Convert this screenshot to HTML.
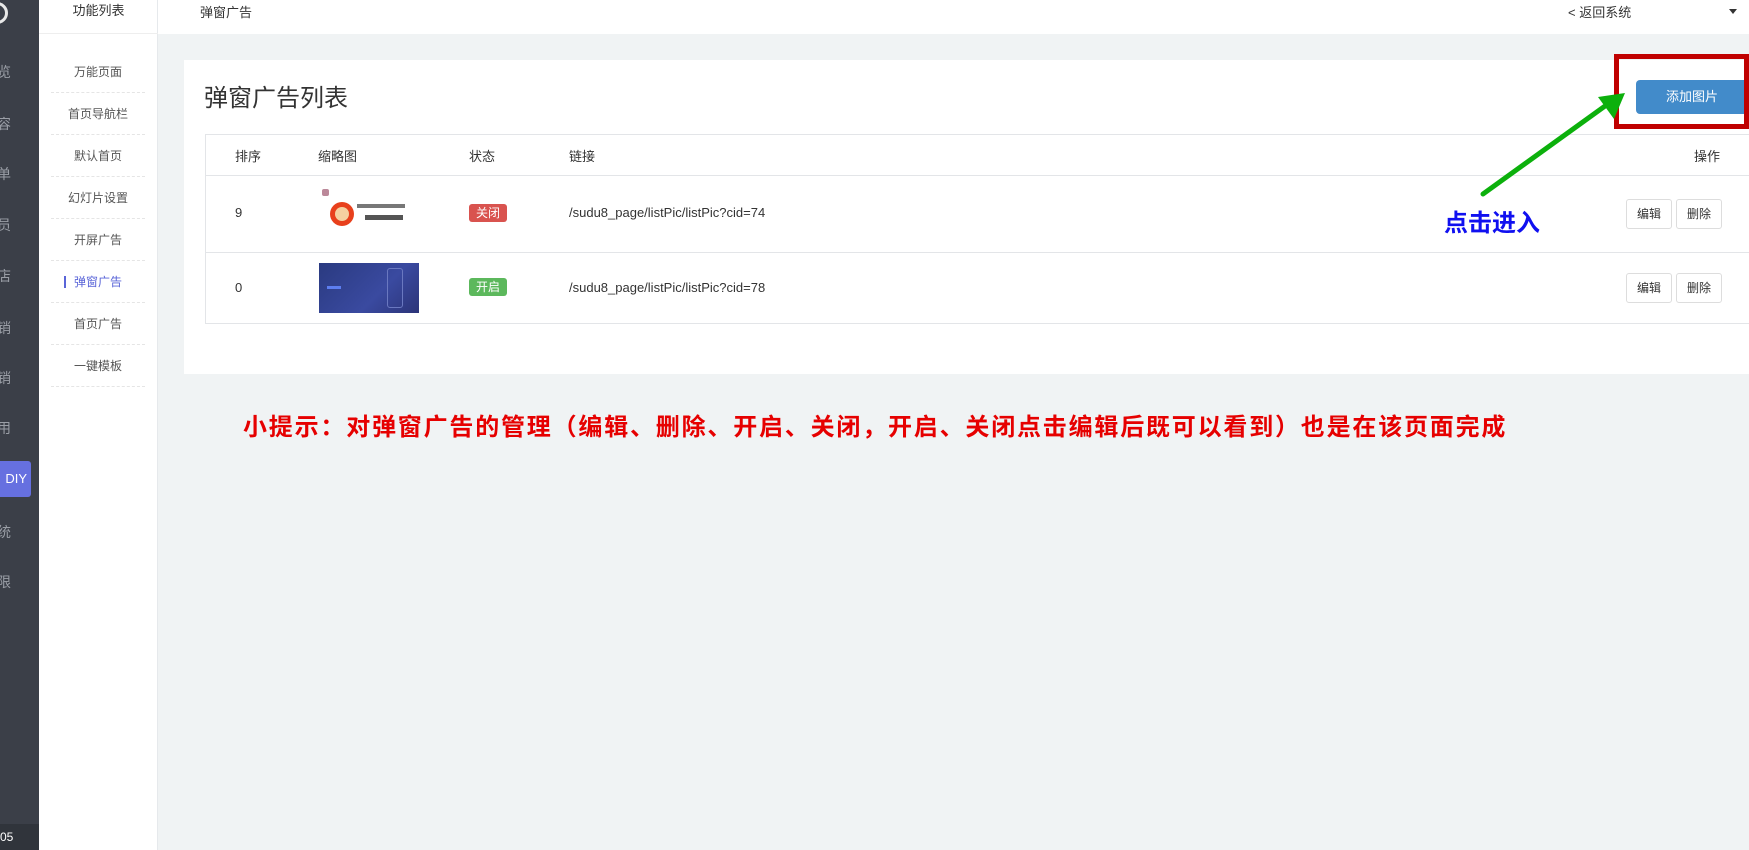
<!DOCTYPE html>
<html><head><meta charset="utf-8"><style>
*{margin:0;padding:0;box-sizing:border-box}
body{width:1749px;height:850px;overflow:hidden;background:#f0f3f4;font-family:"Liberation Sans","Noto Sans CJK SC",sans-serif;color:#333;position:relative}
.a{position:absolute;white-space:nowrap}
#dark{left:0;top:0;width:39px;height:850px;background:#3b3f48;overflow:hidden}
.dl{position:absolute;left:-3px;font-size:14px;color:#9a9ea6}
#side{left:39px;top:0;width:119px;height:850px;background:#fff;border-right:1px solid #e6e9ec}
.mi{position:absolute;left:12px;width:94px;text-align:center;font-size:12px;color:#555;height:42px;line-height:42px;border-bottom:1px dashed #e5e5e5}
#head{left:158px;top:0;width:1591px;height:34px;background:#fff}
#card{left:184px;top:60px;width:1565px;height:314px;background:#fff}
.hl{position:absolute;left:205px;width:1544px;height:1px;background:#e3e5e8}
.td{position:absolute;font-size:13px;color:#333}
.badge{position:absolute;left:469px;width:38px;height:18px;border-radius:3px;color:#fff;font-size:12px;text-align:center;line-height:18px}
.btn{position:absolute;width:46px;height:30px;border:1px solid #ddd;border-radius:3px;background:#fff;font-size:12px;text-align:center;line-height:28px;color:#333}
</style></head><body>
<div class="a" id="dark">
<div style="position:absolute;left:-14px;top:2px;width:22px;height:22px;border-radius:50%;border:3px solid #e8e8e8"></div>
<div class="dl" style="top:62px">览</div>
<div class="dl" style="top:114px">容</div>
<div class="dl" style="top:164px">单</div>
<div class="dl" style="top:215px">员</div>
<div class="dl" style="top:266px">店</div>
<div class="dl" style="top:318px">销</div>
<div class="dl" style="top:368px">销</div>
<div class="dl" style="top:418px">用</div>
<div style="position:absolute;left:0;top:461px;width:31px;height:36px;background:#6670e0;border-radius:0 3px 3px 0;color:#fff;font-size:13px;line-height:36px;text-align:right;padding-right:4px;overflow:hidden">DIY</div>
<div class="dl" style="top:522px">统</div>
<div class="dl" style="top:572px">限</div>
<div style="position:absolute;left:0;top:824px;width:39px;height:26px;background:#30343b;color:#fff;font-size:12px;line-height:26px">05</div>
</div>
<div class="a" id="side">
<div style="position:absolute;left:0;top:0;width:119px;height:34px;border-bottom:1px solid #eee;text-align:center;font-size:13px;line-height:22px">功能列表</div>
<div class="mi" style="top:51px">万能页面</div>
<div class="mi" style="top:93px">首页导航栏</div>
<div class="mi" style="top:135px">默认首页</div>
<div class="mi" style="top:177px">幻灯片设置</div>
<div class="mi" style="top:219px">开屏广告</div>
<div class="mi" style="top:261px;color:#5a65d8">弹窗广告<span style="position:absolute;left:13px;top:15px;width:2px;height:12px;background:#5a65d8"></span></div>
<div class="mi" style="top:303px">首页广告</div>
<div class="mi" style="top:345px">一键模板</div>
</div>
<div class="a" id="head">
<div class="a" style="left:42px;top:2px;font-size:13px">弹窗广告</div>
<div class="a" style="left:1410px;top:2px;font-size:13px">&lt; 返回系统</div>
<div class="a" style="left:1571px;top:9px;width:0;height:0;border-left:4px solid transparent;border-right:4px solid transparent;border-top:5px solid #333"></div>
</div>
<div class="a" id="card"></div>
<div class="a" style="left:204px;top:78px;font-size:24px;color:#333">弹窗广告列表</div>
<div class="a" style="left:205px;top:134px;width:1px;height:190px;background:#e3e5e8"></div>
<div class="hl" style="top:134px"></div>
<div class="hl" style="top:175px"></div>
<div class="hl" style="top:252px"></div>
<div class="hl" style="top:323px"></div>
<div class="td" style="left:235px;top:146px">排序</div>
<div class="td" style="left:318px;top:146px">缩略图</div>
<div class="td" style="left:469px;top:146px">状态</div>
<div class="td" style="left:569px;top:146px">链接</div>
<div class="td" style="left:1694px;top:146px">操作</div>
<div class="td" style="left:235px;top:205px">9</div>
<div class="td" style="left:235px;top:280px">0</div>
<div class="td" style="left:569px;top:205px">/sudu8_page/listPic/listPic?cid=74</div>
<div class="td" style="left:569px;top:280px">/sudu8_page/listPic/listPic?cid=78</div>
<div class="badge" style="top:204px;background:#d9534f">关闭</div>
<div class="badge" style="top:278px;background:#5cb85c">开启</div>
<div class="a" style="left:322px;top:189px;width:7px;height:7px;background:#b89;border-radius:2px"></div>
<div class="a" style="left:330px;top:202px;width:24px;height:24px;border-radius:50%;background:#e8401c"><div style="margin:5px;width:14px;height:14px;border-radius:50%;background:#f5d0a0"></div></div>
<div class="a" style="left:357px;top:204px;width:48px;height:4px;background:#777"></div>
<div class="a" style="left:365px;top:215px;width:38px;height:5px;background:#555"></div>
<div class="a" style="left:319px;top:263px;width:100px;height:50px;background:linear-gradient(135deg,#2a3a80,#3a4aa0 60%,#2c3478)"><div style="position:absolute;left:68px;top:5px;width:16px;height:40px;border:1px solid #6a78c0;border-radius:3px"></div><div style="position:absolute;left:8px;top:23px;width:14px;height:3px;background:#5d7ef0"></div></div>
<div class="btn" style="left:1626px;top:199px">编辑</div>
<div class="btn" style="left:1676px;top:199px">删除</div>
<div class="btn" style="left:1626px;top:273px">编辑</div>
<div class="btn" style="left:1676px;top:273px">删除</div>
<div class="a" style="left:1636px;top:80px;width:120px;height:34px;background:#428bca;border-radius:4px;color:#fff;font-size:13px;line-height:34px;padding-left:30px">添加图片</div>
<div class="a" style="left:1614px;top:54px;width:135px;height:75px;border:5px solid #c00000"></div>
<svg class="a" style="left:0;top:0" width="1749" height="850"><line x1="1483" y1="194" x2="1612" y2="101" stroke="#0cb00c" stroke-width="5" stroke-linecap="round"/><polygon points="1625,93 1598,97 1614,119" fill="#0cb00c"/></svg>
<div class="a" style="left:1444px;top:203px;font-size:24px;font-weight:bold;color:#1010f0">点击进入</div>
<div class="a" style="left:243px;top:407px;font-size:24px;font-weight:bold;color:#e60000;letter-spacing:1.8px">小提示：对弹窗广告的管理（编辑、删除、开启、关闭，开启、关闭点击编辑后既可以看到）也是在该页面完成</div>
</body></html>
